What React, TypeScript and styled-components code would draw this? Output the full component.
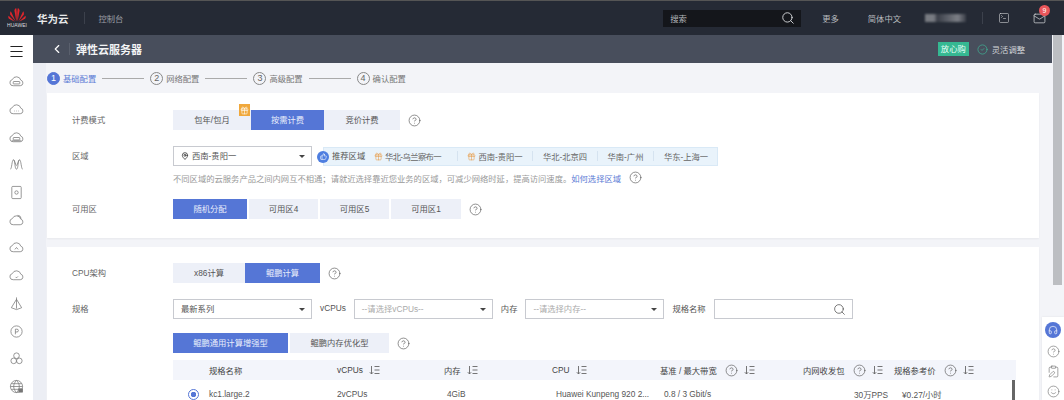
import React from "react";
import styled, { createGlobalStyle } from "styled-components";
import {
  Menu,
  ChevronLeft,
  Search,
  SquareTerminal,
  Mail,
  CircleCheck,
  CircleHelp,
  MapPin,
  Gift,
  ThumbsUp,
  Headphones,
  ClipboardPen,
  Smile,
} from "lucide-react";

const GlobalStyle = createGlobalStyle`
  html, body {
    margin: 0;
    padding: 0;
    width: 1064px;
    height: 400px;
    overflow: hidden;
    background: #f0f2f6;
    font-family: "Liberation Sans", "Noto Sans CJK SC", sans-serif;
  }
`;

const CLOUD = "M4.5 12.5h7.5a3 3 0 0 0 .6-5.9A4.8 4.8 0 0 0 3.5 6 3.3 3.3 0 0 0 4.5 12.5z";

const SIDE_ICONS: React.ReactNode[] = [
  <><path d={CLOUD} /><rect x="4.5" y="8" width="7" height="2.6" rx=".6" /></>,
  <><path d={CLOUD} /><path d="M5.5 9.6h.6M7.7 9.6h.6M9.9 9.6h.6" /></>,
  <><path d={CLOUD} /><rect x="4.5" y="8" width="7" height="2.6" rx=".6" /><path d="M3 11.5h10" /></>,
  <path d="M1.5 13C3 13 3 3 4.8 3S6 13 8 13 9.4 3 11.2 3 13 13 14.5 13M4.8 3c1.4 0 2 6 3.2 6s1.800-6 3.200-6" />,
  <><rect x="3" y="1.500" width="10" height="13" rx="1" /><circle cx="8" cy="8" r="1.800" /></>,
  <><path d={CLOUD} /><path d="M9 2.500a4 4 0 0 1 4 3.500" /></>,
  <><path d={CLOUD} /><path d="M6.300 10l1.700-2 1.700 2" /></>,
  <><path d={CLOUD} /><path d="M7 9.500l1 1 1.500-1.500" /></>,
  <path d="M8 1.500v12M8 3.500 2.500 12.500 8 14.500l5.500-2z" />,
  <><circle cx="8" cy="8" r="6" /><path d="M6.800 11V5.500h1.700a1.400 1.400 0 0 1 0 3H6.800" /></>,
  <><circle cx="8" cy="5" r="3" /><circle cx="5" cy="10.500" r="3" /><circle cx="11" cy="10.500" r="3" /></>,
  <><circle cx="8" cy="8" r="6.500" /><path d="M1.500 8h13M8 1.500c-4 4-4 9 0 13M8 1.500c4 4 4 9 0 13M2.500 5h11M2.500 11h11" /><rect x="10.500" y="10.500" width="4" height="3.500" fill="#777" /></>,
];

const Help = () => (
  <HelpMark>
    <CircleHelp size={13} strokeWidth={1.2} />
  </HelpMark>
);

const Sort = () => (
  <SortMark>
    <svg width="11" height="10" viewBox="0 0 11 10" fill="none" stroke="currentColor" strokeWidth="0.9">
      <path d="M2.500 1v8M.8 7.200 2.500 9 4.200 7.200M5.500 1.500H10.500M5.500 5H10.500M5.500 8.500H10.500" />
    </svg>
  </SortMark>
);

const Logo = () => (
  <LogoBox>
    <svg width="20" height="14" viewBox="0 0 20 15">
      <g fill="#e0262c">
        <path d="M9.400 14.500 7.200 2.800C7.400 1.600 8.200.6 9 0c.8 2 1 7 .4 14.500z" />
        <path d="M10.600 14.500 12.800 2.800C12.600 1.600 11.800.6 11 0c-.8 2-1 7-.4 14.500z" />
        <path d="M8.600 14.500 3.400 3.600C2.600 4.600 2.400 6 2.800 7.200l5.800 7.300z" />
        <path d="M11.400 14.500 16.600 3.600c.8 1 1 2.400.6 3.600l-5.800 7.300z" />
        <path d="M7.800 14.600 1 8.400C.4 9.600.6 10.800 1.400 11.600l6.400 3z" />
        <path d="M12.200 14.600 19 8.400c.6 1.200.4 2.400-.4 3.200l-6.400 3z" />
      </g>
    </svg>
    <LogoText>HUAWEI</LogoText>
  </LogoBox>
);

export default function App() {
  return (
    <>
      <GlobalStyle />
      <Page>
        <TopBar>
          <Logo />
          <Brand>华为云</Brand>
          <BarDivider />
          <Console>控制台</Console>
          <TopRight>
            <SearchBox>
              <span>搜索</span>
              <Search size={14} strokeWidth={1.6} color="#d5d7da" />
            </SearchBox>
            <TopLink $left={21}>更多</TopLink>
            <TopLink $left={29}>简体中文</TopLink>
            <BlurName $left={24} />
            <BarDivider $left={16} />
            <TopIcon $left={15}>
              <SquareTerminal size={12} strokeWidth={1.2} />
            </TopIcon>
            <TopIcon $left={23}>
              <Mail size={13} strokeWidth={1.4} />
              <Badge>9</Badge>
            </TopIcon>
          </TopRight>
        </TopBar>

        <Body>
          <SideBar>
            <SideHead>
              <Menu size={17} strokeWidth={1.5} color="#222" />
            </SideHead>
            <SideList>
              {SIDE_ICONS.map((icon, i) => (
                <SideItem key={i}>
                  <svg width="15" height="15" viewBox="0 0 16 16" fill="none" stroke="currentColor" strokeWidth="0.8">
                    {icon}
                  </svg>
                </SideItem>
              ))}
            </SideList>
          </SideBar>

          <Main>
            <SubHeader>
              <ChevronLeft size={14} strokeWidth={2} color="#fff" />
              <SubDivider />
              <SubTitle>弹性云服务器</SubTitle>
              <SubRight>
                <GreenTag>放心购</GreenTag>
                <CircleCheck size={11} strokeWidth={1.3} color="#3ec6a0" />
                <FlexText>灵活调整</FlexText>
              </SubRight>
            </SubHeader>

            <Content>
              <Gutter />
              <Column>
                <Steps>
                  <Step $active>
                    <StepNum $active>1</StepNum>基础配置
                  </Step>
                  <StepLine />
                  <Step>
                    <StepNum>2</StepNum>网络配置
                  </Step>
                  <StepLine />
                  <Step>
                    <StepNum>3</StepNum>高级配置
                  </Step>
                  <StepLine />
                  <Step>
                    <StepNum>4</StepNum>确认配置
                  </Step>
                </Steps>

                <Card $height={145}>
                  <Row $top={17}>
                    <Label>计费模式</Label>
                    <Segments>
                      <Seg $w={78}>包年/包月</Seg>
                      <Seg $w={73} $on>
                        按需计费
                        <GiftTag>
                          <Gift size={9} strokeWidth={1.6} color="#fff" />
                        </GiftTag>
                      </Seg>
                      <Seg $w={76}>竞价计费</Seg>
                    </Segments>
                    <Help />
                  </Row>
                  <Row $top={16}>
                    <Label>区域</Label>
                    <Select $w={139}>
                      <MapPin size={8} strokeWidth={2.4} color="#333" />
                      <SelectText>西南-贵阳一</SelectText>
                      <CaretMark />
                    </Select>
                    <RegionBar>
                      <ThumbDot>
                        <ThumbsUp size={7} strokeWidth={2} color="#fff" />
                      </ThumbDot>
                      <RegionLead>推荐区域</RegionLead>
                      <Region $w={91} $tight>
                        <Gift size={9} strokeWidth={1.4} color="#e8963c" />
                        华北-乌兰察布一
                      </Region>
                      <Region $w={75} $sep>
                        <Gift size={9} strokeWidth={1.4} color="#e8963c" />
                        西南-贵阳一
                      </Region>
                      <Region $w={65} $sep>华北-北京四</Region>
                      <Region $w={56} $sep>华南-广州</Region>
                      <Region $w={65} $sep>华东-上海一</Region>
                    </RegionBar>
                  </Row>
                  <HintRow>
                    不同区域的云服务产品之间内网互不相通；请就近选择靠近您业务的区域，可减少网络时延，提高访问速度。
                    <HintLink>如何选择区域</HintLink>
                    <Help />
                  </HintRow>
                  <Row $top={15}>
                    <Label>可用区</Label>
                    <Segments $gap={2}>
                      <Seg $w={74} $on>随机分配</Seg>
                      <Seg $w={69}>可用区4</Seg>
                      <Seg $w={69}>可用区5</Seg>
                      <Seg $w={70}>可用区1</Seg>
                    </Segments>
                    <Help />
                  </Row>
                </Card>

                <Card $height={170}>
                  <Row $top={16}>
                    <Label>CPU架构</Label>
                    <Segments>
                      <Seg $w={72}>x86计算</Seg>
                      <Seg $w={75} $on>鲲鹏计算</Seg>
                    </Segments>
                    <Help />
                  </Row>
                  <Row $top={16}>
                    <Label>规格</Label>
                    <Select $w={139}>
                      <SelectText>最新系列</SelectText>
                      <CaretMark />
                    </Select>
                    <InlineLabel>vCPUs</InlineLabel>
                    <Select $w={139}>
                      <SelectText $muted>--请选择vCPUs--</SelectText>
                      <CaretMark />
                    </Select>
                    <InlineLabel>内存</InlineLabel>
                    <Select $w={139}>
                      <SelectText $muted>--请选择内存--</SelectText>
                      <CaretMark />
                    </Select>
                    <InlineLabel>规格名称</InlineLabel>
                    <Select $w={139}>
                      <SelectText />
                      <Search size={13} strokeWidth={1.3} color="#444" />
                    </Select>
                  </Row>
                  <Row $top={14} $indent>
                    <Segments $gap={2}>
                      <Seg $w={115} $on>鲲鹏通用计算增强型</Seg>
                      <Seg $w={99}>鲲鹏内存优化型</Seg>
                    </Segments>
                    <Help />
                  </Row>
                  <Table>
                    <HeadRow>
                      <HeadCell $w={164} $pad={36}>规格名称</HeadCell>
                      <HeadCell $w={107}>vCPUs<Sort /></HeadCell>
                      <HeadCell $w={108}>内存<Sort /></HeadCell>
                      <HeadCell $w={108}>CPU<Sort /></HeadCell>
                      <HeadCell $w={143}>基准 / 最大带宽<Help /><Sort /></HeadCell>
                      <HeadCell $w={91}>内网收发包<Help /><Sort /></HeadCell>
                      <HeadCell $w={122}>规格参考价<Help /><Sort /></HeadCell>
                    </HeadRow>
                    <BodyRow>
                      <DataCell $w={164} $pad={15}>
                        <Radio />
                        kc1.large.2
                      </DataCell>
                      <DataCell $w={110}>2vCPUs</DataCell>
                      <DataCell $w={109}>4GiB</DataCell>
                      <DataCell $w={108}>Huawei Kunpeng 920 2...</DataCell>
                      <DataCell $w={190}>0.8 / 3 Gbit/s</DataCell>
                      <DataCell $w={48}>30万PPS</DataCell>
                      <DataCell $w={60}>¥0.27/小时</DataCell>
                    </BodyRow>
                    <TableThumb />
                  </Table>
                </Card>
              </Column>
            </Content>
          </Main>

          <ScrollTrack>
            <ScrollThumb />
          </ScrollTrack>
        </Body>

        <FloatBar>
          <HeadsetDot>
            <Headphones size={10} strokeWidth={1.6} color="#fff" />
          </HeadsetDot>
          <CircleHelp size={13} strokeWidth={1.1} />
          <ClipboardPen size={13} strokeWidth={1.1} />
          <Smile size={13} strokeWidth={1.1} />
        </FloatBar>
      </Page>
    </>
  );
}

const Page = styled.div`
  position: relative;
  width: 1064px;
  height: 400px;
  display: flex;
  flex-direction: column;
  overflow: hidden;
  color: #555;
`;

const TopBar = styled.div`
  height: 35px;
  box-sizing: border-box;
  flex: none;
  display: flex;
  align-items: center;
  background: #252a35;
  border-top: 1px solid #555;
`;

const LogoBox = styled.div`
  width: 20px;
  margin-left: 7px;
  display: flex;
  flex-direction: column;
  align-items: center;
`;

const LogoText = styled.span`
  font-size: 5px;
  line-height: 6px;
  color: #ddd;
  white-space: nowrap;
`;

const Brand = styled.div`
  margin-left: 10px;
  font-size: 10.5px;
  font-weight: bold;
  color: #e8e9ea;
`;

const BarDivider = styled.div<{ $left?: number }>`
  width: 1px;
  height: 12px;
  background: #3c414c;
  margin-left: ${({ $left }) => $left ?? 15}px;
`;

const Console = styled.div`
  margin-left: 14px;
  font-size: 8.3px;
  color: #9a9da3;
`;

const TopRight = styled.div`
  margin-left: auto;
  display: flex;
  align-items: center;
  padding-right: 18px;
`;

const SearchBox = styled.div`
  width: 138px;
  height: 17px;
  box-sizing: border-box;
  padding: 0 6px 0 7px;
  background: #14161b;
  display: flex;
  align-items: center;
  justify-content: space-between;
  font-size: 8.3px;
  color: #b5b7ba;
`;

const TopLink = styled.div<{ $left: number }>`
  margin-left: ${({ $left }) => $left}px;
  font-size: 8.3px;
  color: #b9bbbf;
  white-space: nowrap;
`;

const BlurName = styled.div<{ $left: number }>`
  margin-left: ${({ $left }) => $left}px;
  width: 41px;
  height: 8px;
  background: linear-gradient(90deg, #787b82 0 22%, #3a3e48 30%, #555962 50%, #7c7f86 80%, #3a3e48);
  filter: blur(1px);
`;

const TopIcon = styled.div<{ $left: number }>`
  position: relative;
  margin-left: ${({ $left }) => $left}px;
  display: flex;
  color: #d0d2d5;
`;

const Badge = styled.span`
  position: absolute;
  top: -7px;
  right: -4px;
  width: 11px;
  height: 11px;
  border-radius: 50%;
  background: #e9565a;
  color: #fff;
  font-size: 7px;
  line-height: 11px;
  text-align: center;
`;

const Body = styled.div`
  flex: 1;
  display: flex;
  min-height: 0;
`;

const SideBar = styled.div`
  width: 33px;
  flex: none;
  background: #fff;
  display: flex;
  flex-direction: column;
`;

const SideHead = styled.div`
  height: 33px;
  flex: none;
  display: flex;
  align-items: center;
  justify-content: center;
`;

const SideList = styled.div`
  display: flex;
  flex-direction: column;
`;

const SideItem = styled.div`
  height: 27.7px;
  display: flex;
  align-items: center;
  justify-content: center;
  color: #777;
`;

const Main = styled.div`
  width: 1019px;
  flex: none;
  display: flex;
  flex-direction: column;
`;

const SubHeader = styled.div`
  height: 28px;
  flex: none;
  background: #484e5c;
  display: flex;
  align-items: center;
  padding: 0 27px 0 17px;
`;

const SubDivider = styled.div`
  width: 1px;
  height: 12px;
  background: #5a606d;
  margin-left: 5px;
`;

const SubTitle = styled.div`
  margin-left: 6px;
  font-size: 11px;
  font-weight: bold;
  color: #f2f3f4;
`;

const SubRight = styled.div`
  margin-left: auto;
  display: flex;
  align-items: center;
  gap: 4px;
`;

const GreenTag = styled.span`
  background: #35b892;
  color: #e8fff8;
  font-size: 8.3px;
  line-height: 14px;
  width: 31px;
  text-align: center;
  margin-right: 4px;
`;

const FlexText = styled.span`
  font-size: 8.3px;
  color: #d5d7da;
`;

const Content = styled.div`
  flex: 1;
  display: flex;
  min-height: 0;
  background: #f3f4f8;
`;

const Gutter = styled.div`
  width: 13px;
  flex: none;
  margin-right: 1px;
  background: #eceef4;
`;

const Column = styled.div`
  width: 992px;
  flex: none;
  display: flex;
  flex-direction: column;
`;

const Steps = styled.div`
  height: 30px;
  flex: none;
  display: flex;
  align-items: center;
`;

const Step = styled.div<{ $active?: boolean }>`
  display: flex;
  align-items: center;
  gap: 3px;
  font-size: 8.3px;
  color: ${({ $active }) => ($active ? "#5b7bd5" : "#777")};
  white-space: nowrap;
`;

const StepNum = styled.span<{ $active?: boolean }>`
  width: 13px;
  height: 13px;
  box-sizing: border-box;
  border-radius: 50%;
  display: flex;
  align-items: center;
  justify-content: center;
  font-size: 9px;
  color: ${({ $active }) => ($active ? "#fff" : "#666")};
  background: ${({ $active }) => ($active ? "#5576d6" : "transparent")};
  border: 1px solid ${({ $active }) => ($active ? "#5576d6" : "#888")};
`;

const StepLine = styled.div`
  width: 42px;
  height: 1px;
  background: #aaa;
  margin: 0 6px;
`;

const Card = styled.div<{ $height: number }>`
  height: ${({ $height }) => $height}px;
  flex: none;
  background: #fff;
  margin-bottom: 9px;
  box-shadow: 0 1px 2px rgba(0, 0, 0, 0.05);
  box-sizing: border-box;
`;

const Row = styled.div<{ $top: number; $indent?: boolean }>`
  display: flex;
  align-items: center;
  height: 20px;
  margin-top: ${({ $top }) => $top}px;
  padding-left: ${({ $indent }) => ($indent ? 126 : 25)}px;
`;

const Label = styled.div`
  width: 101px;
  flex: none;
  padding-bottom: 2px;
  font-size: 8.3px;
  color: #666;
`;

const Segments = styled.div<{ $gap?: number }>`
  display: flex;
  gap: ${({ $gap }) => $gap ?? 0}px;
`;

const Seg = styled.div<{ $w: number; $on?: boolean }>`
  position: relative;
  width: ${({ $w }) => $w}px;
  height: 20px;
  box-sizing: border-box;
  padding-bottom: 2px;
  display: flex;
  align-items: center;
  justify-content: center;
  font-size: 8.3px;
  background: ${({ $on }) => ($on ? "#5576d6" : "#edf0f8")};
  color: ${({ $on }) => ($on ? "#e8edfb" : "#555")};
`;

const GiftTag = styled.span`
  position: absolute;
  top: -6px;
  left: -12px;
  width: 11px;
  height: 12px;
  background: #f0a83c;
  display: flex;
  align-items: center;
  justify-content: center;
`;

const HelpMark = styled.span`
  display: inline-flex;
  margin-left: 8px;
  color: #555;
`;

const SortMark = styled.span`
  display: inline-flex;
  margin-left: 6px;
  color: #666;
`;

const Select = styled.div<{ $w: number }>`
  width: ${({ $w }) => $w}px;
  height: 20px;
  flex: none;
  box-sizing: border-box;
  border: 1px solid #c8cad0;
  background: #fff;
  display: flex;
  align-items: center;
  padding: 0 6px 0 7px;
  gap: 3px;
`;

const SelectText = styled.span<{ $muted?: boolean }>`
  flex: 1;
  padding-bottom: 2px;
  font-size: 8.3px;
  color: ${({ $muted }) => ($muted ? "#aaa" : "#555")};
`;

const CaretMark = styled.span`
  width: 0;
  height: 0;
  border-left: 3px solid transparent;
  border-right: 3px solid transparent;
  border-top: 3px solid #444;
`;

const RegionBar = styled.div`
  position: relative;
  margin-left: 11px;
  width: 395px;
  height: 19px;
  display: flex;
  align-items: center;
  background: #e9f3fb;
  box-shadow: inset 0 0 0 1px #d9e9f6;
`;

const ThumbDot = styled.span`
  position: absolute;
  left: -6px;
  top: 4px;
  width: 12px;
  height: 12px;
  border-radius: 50%;
  background: #4e7ee0;
  display: flex;
  align-items: center;
  justify-content: center;
`;

const RegionLead = styled.span`
  margin-left: 9px;
  width: 34px;
  flex: none;
  padding-bottom: 2px;
  font-size: 8.3px;
  color: #555;
`;

const Region = styled.span<{ $w: number; $sep?: boolean; $tight?: boolean }>`
  width: ${({ $w }) => $w}px;
  box-sizing: border-box;
  flex: none;
  display: flex;
  align-items: center;
  justify-content: center;
  gap: 2px;
  height: 10px;
  padding-right: ${({ $tight }) => ($tight ? 8 : 0)}px;
  letter-spacing: ${({ $tight }) => ($tight ? -0.6 : 0)}px;
  font-size: 8.3px;
  color: #666;
  white-space: nowrap;
  border-left: ${({ $sep }) => ($sep ? "1px solid #d5e3f0" : "none")};
`;

const HintRow = styled.div`
  display: flex;
  align-items: center;
  height: 13px;
  margin-top: 5px;
  padding-left: 126px;
  font-size: 8.3px;
  color: #999;
  white-space: nowrap;
`;

const HintLink = styled.span`
  color: #5b7bd5;
`;

const InlineLabel = styled.span`
  margin: 0 8px;
  padding-bottom: 2px;
  font-size: 8.3px;
  color: #555;
  white-space: nowrap;
`;

const Table = styled.div`
  position: relative;
  margin: 7px 0 0 126px;
  width: 843px;
`;

const HeadRow = styled.div`
  height: 20px;
  display: flex;
  align-items: center;
  background: #f3f5fb;
`;

const HeadCell = styled.div<{ $w: number; $pad?: number }>`
  width: ${({ $w }) => $w}px;
  box-sizing: border-box;
  padding-left: ${({ $pad }) => $pad ?? 0}px;
  flex: none;
  display: flex;
  align-items: center;
  font-size: 8.3px;
  color: #444;
  white-space: nowrap;
`;

const BodyRow = styled.div`
  height: 28px;
  display: flex;
  align-items: center;
`;

const DataCell = styled.div<{ $w: number; $pad?: number }>`
  width: ${({ $w }) => $w}px;
  box-sizing: border-box;
  padding-left: ${({ $pad }) => $pad ?? 0}px;
  flex: none;
  display: flex;
  align-items: center;
  gap: 10px;
  font-size: 8.3px;
  color: #555;
  white-space: nowrap;
`;

const Radio = styled.span`
  width: 11px;
  height: 11px;
  box-sizing: border-box;
  border-radius: 50%;
  border: 1px solid #5576d6;
  background: radial-gradient(circle, #5576d6 0 2.5px, #fff 3px);
`;

const TableThumb = styled.div`
  position: absolute;
  right: 1px;
  top: 20px;
  width: 3px;
  height: 28px;
  background: #666;
`;

const ScrollTrack = styled.div`
  flex: 1;
  background: #f3f4f8;
  padding-left: 1px;
`;

const ScrollThumb = styled.div`
  width: 9px;
  height: 250px;
  background: #bcbec2;
`;

const FloatBar = styled.div`
  position: absolute;
  right: 0;
  top: 317px;
  width: 22px;
  height: 83px;
  box-sizing: border-box;
  background: #fff;
  box-shadow: 0 0 2px rgba(0, 0, 0, 0.08);
  display: flex;
  flex-direction: column;
  align-items: center;
  gap: 7px;
  padding-top: 5px;
  color: #666;
`;

const HeadsetDot = styled.span`
  width: 16px;
  height: 16px;
  border-radius: 50%;
  background: #5576d6;
  display: flex;
  align-items: center;
  justify-content: center;
`;
